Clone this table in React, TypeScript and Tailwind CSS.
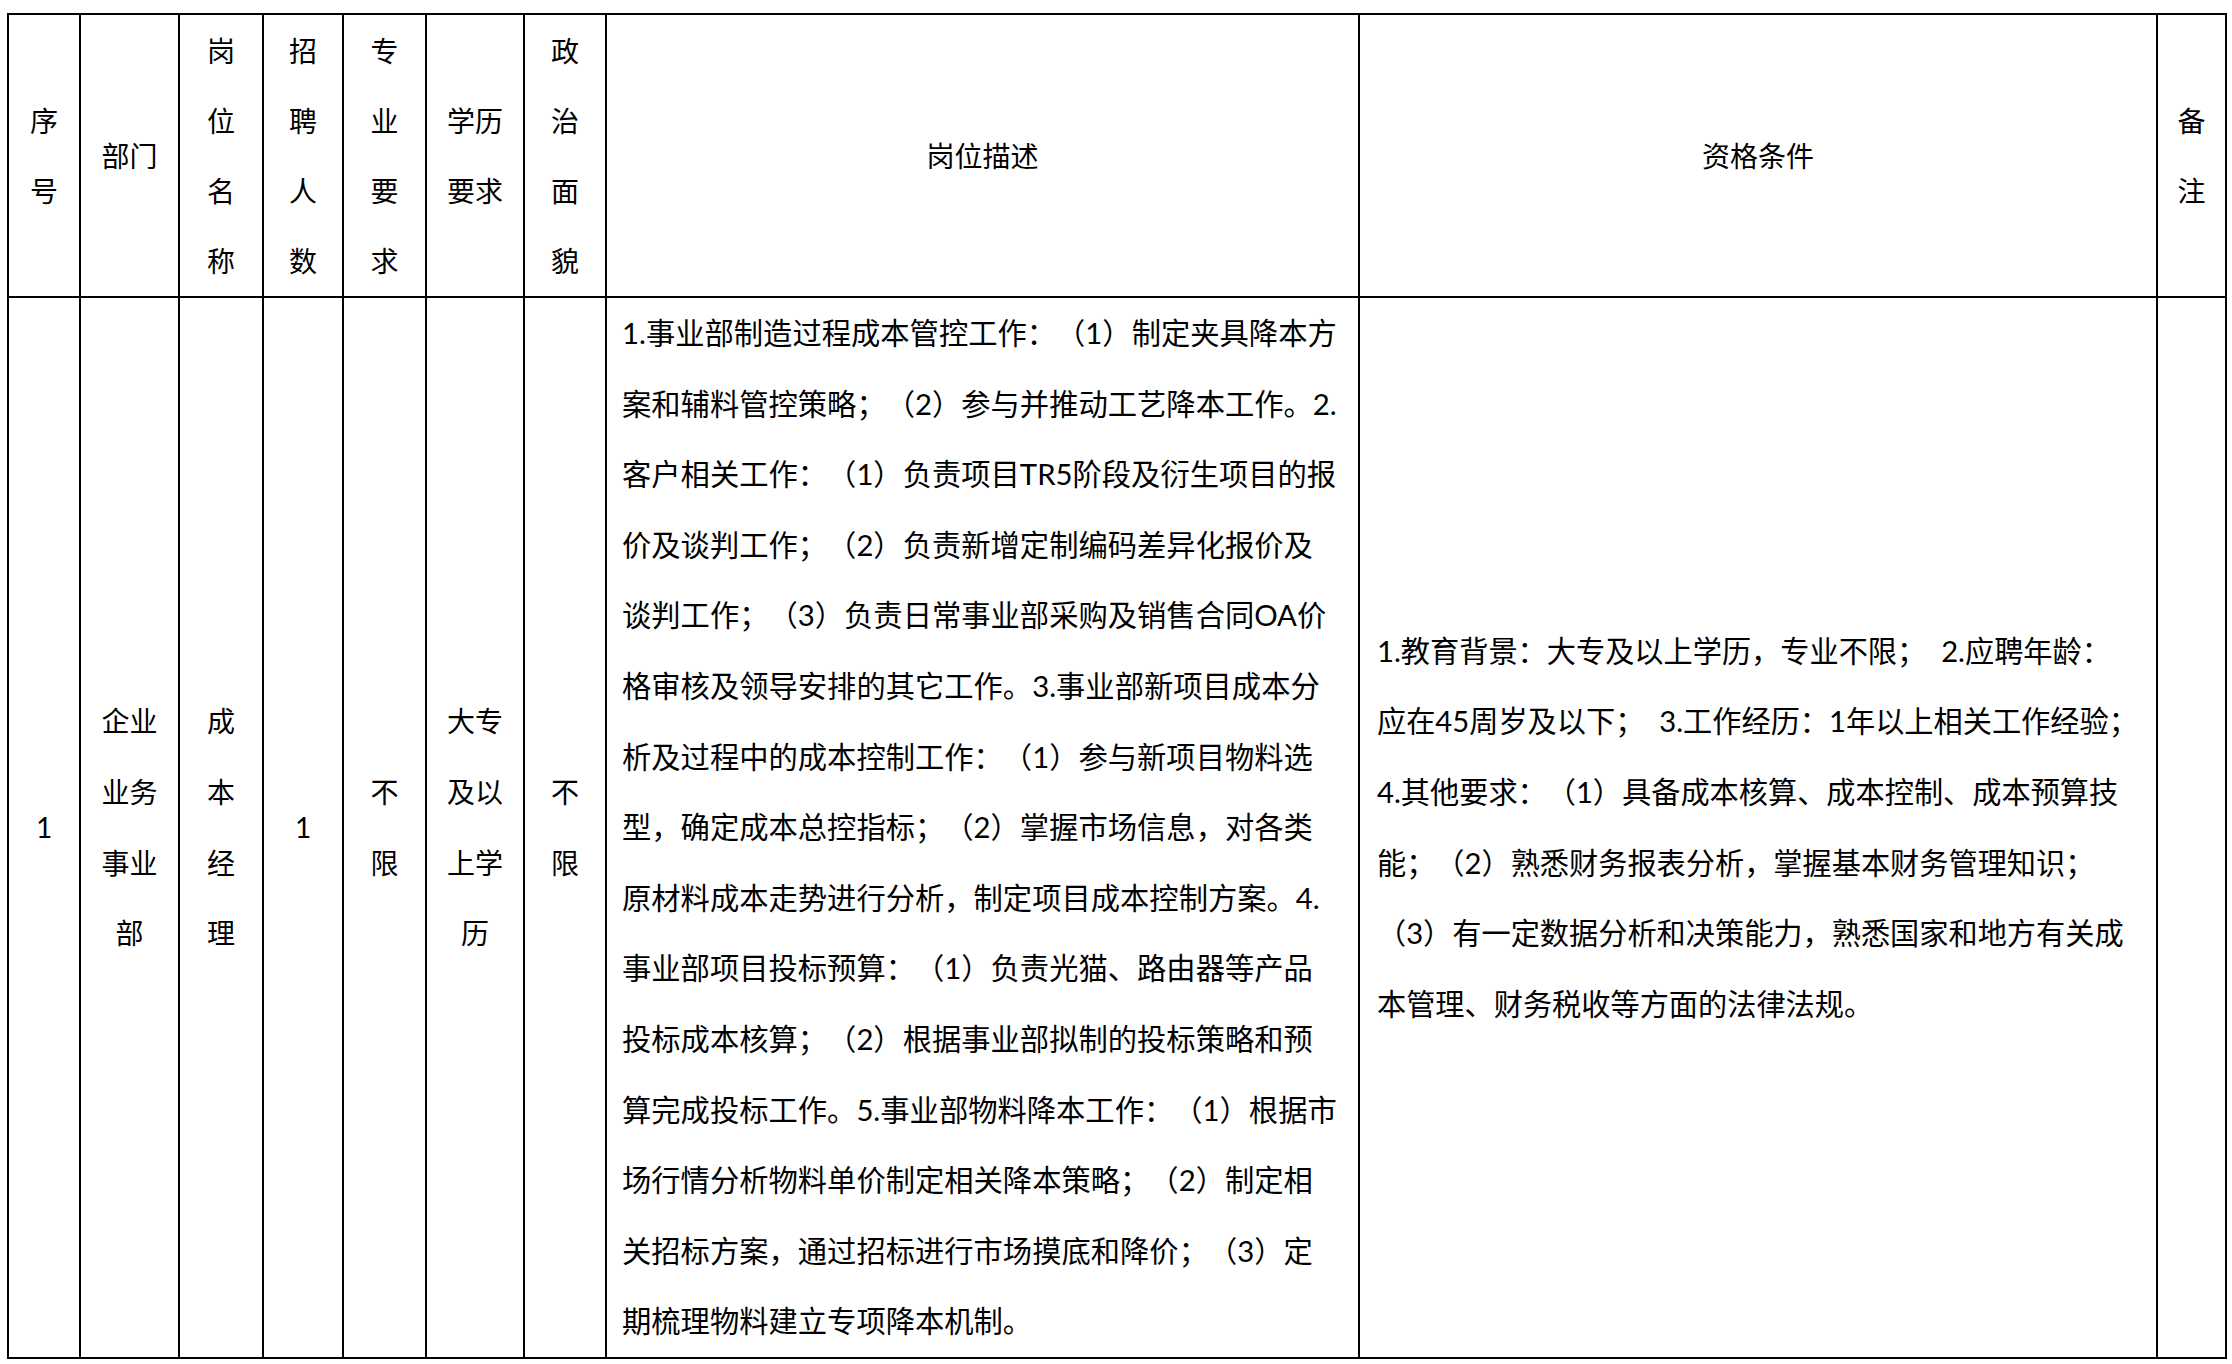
const headers: string[][] = [
  ["序", "号"],
  ["部门"],
  ["岗", "位", "名", "称"],
  ["招", "聘", "人", "数"],
  ["专", "业", "要", "求"],
  ["学历", "要求"],
  ["政", "治", "面", "貌"],
  ["岗位描述"],
  ["资格条件"],
  ["备", "注"],
];

const shortCells: string[][] = [
  ["1"],
  ["企业", "业务", "事业", "部"],
  ["成", "本", "经", "理"],
  ["1"],
  ["不", "限"],
  ["大专", "及以", "上学", "历"],
  ["不", "限"],
];

const description = [
  "1.事业部制造过程成本管控工作：（1）制定夹具降本方",
  "案和辅料管控策略；（2）参与并推动工艺降本工作。2.",
  "客户相关工作：（1）负责项目TR5阶段及衍生项目的报",
  "价及谈判工作；（2）负责新增定制编码差异化报价及",
  "谈判工作；（3）负责日常事业部采购及销售合同OA价",
  "格审核及领导安排的其它工作。3.事业部新项目成本分",
  "析及过程中的成本控制工作：（1）参与新项目物料选",
  "型，确定成本总控指标；（2）掌握市场信息，对各类",
  "原材料成本走势进行分析，制定项目成本控制方案。4.",
  "事业部项目投标预算：（1）负责光猫、路由器等产品",
  "投标成本核算；（2）根据事业部拟制的投标策略和预",
  "算完成投标工作。5.事业部物料降本工作：（1）根据市",
  "场行情分析物料单价制定相关降本策略；（2）制定相",
  "关招标方案，通过招标进行市场摸底和降价；（3）定",
  "期梳理物料建立专项降本机制。",
];

const qualification = [
  "1.教育背景：大专及以上学历，专业不限；  2.应聘年龄：",
  "应在45周岁及以下；  3.工作经历：1年以上相关工作经验；",
  "4.其他要求：（1）具备成本核算、成本控制、成本预算技",
  "能；（2）熟悉财务报表分析，掌握基本财务管理知识；",
  "（3）有一定数据分析和决策能力，熟悉国家和地方有关成",
  "本管理、财务税收等方面的法律法规。",
];

const colWidths = [
  "w-[72px]",
  "w-[99px]",
  "w-[84px]",
  "w-[80px]",
  "w-[83px]",
  "w-[98px]",
  "w-[82px]",
  "w-[753px]",
  "w-[798px]",
  "w-[69px]",
];

function Lines({ lines }: { lines: string[] }) {
  return (
    <>
      {lines.map((line, i) => (
        <div key={i} className="whitespace-pre">
          {line}
        </div>
      ))}
    </>
  );
}

export default function App() {
  return (
    <div className="min-h-screen bg-white pl-[7px] pt-[13px] text-black [text-spacing-trim:space-all] font-[Lato,'Noto_Sans_CJK_SC',sans-serif]">
      <table className="table-fixed border-collapse w-[2220px]">
        <colgroup>
          {colWidths.map((w, i) => (
            <col key={i} className={w} />
          ))}
        </colgroup>
        <thead>
          <tr className="h-[283px]">
            {headers.map((lines, i) => (
              <th
                key={i}
                className="border-2 border-black p-0 text-center align-middle font-normal text-[28px] leading-[70px]"
              >
                <Lines lines={lines} />
              </th>
            ))}
          </tr>
        </thead>
        <tbody>
          <tr className="h-[1061px]">
            {shortCells.map((lines, i) => (
              <td
                key={i}
                className="border-2 border-black p-0 text-center align-middle text-[28px] leading-[70.6px]"
              >
                <Lines lines={lines} />
              </td>
            ))}
            {/* 岗位描述 */}
            <td className="border-2 border-black py-0 pl-[15px] pr-2 text-left align-middle text-[29.3px] leading-[70.6px]">
              <Lines lines={description} />
            </td>
            {/* 资格条件 */}
            <td className="border-2 border-black py-0 pl-[17px] pr-2 text-left align-middle text-[29.2px] leading-[70.6px]">
              <Lines lines={qualification} />
            </td>
            <td className="border-2 border-black p-0" />
          </tr>
        </tbody>
      </table>
    </div>
  );
}
